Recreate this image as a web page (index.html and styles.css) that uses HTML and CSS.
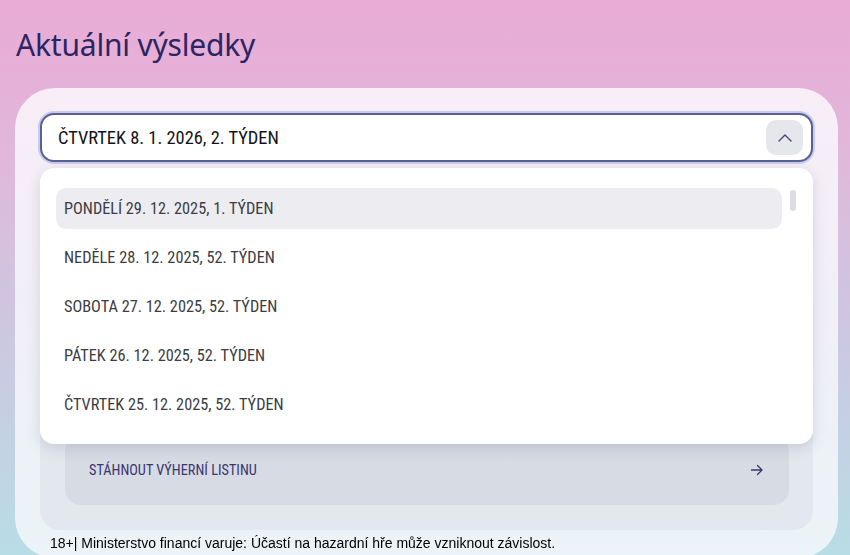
FILE: index.html
```html
<!DOCTYPE html>
<html lang="cs">
<head>
<meta charset="utf-8">
<title>Aktuální výsledky</title>
<link rel="stylesheet" href="styles.css">
</head>
<body>
<main class="page">
  <h1 class="title">Aktuální výsledky</h1>
  <section class="card">
    <div class="select-wrap">
      <div class="select">
        <span class="select-value">ČTVRTEK 8. 1. 2026, 2. TÝDEN</span>
        <span class="select-btn">
          <svg width="18" height="18" viewBox="0 0 18 18" fill="none" stroke="#4a4872" stroke-width="1.4" stroke-linecap="round" stroke-linejoin="round"><path d="M3 12 L9 6 L15 12"/></svg>
        </span>
      </div>
      <ul class="menu">
        <li class="opt opt-active">PONDĚLÍ 29. 12. 2025, 1. TÝDEN</li>
        <li class="opt">NEDĚLE 28. 12. 2025, 52. TÝDEN</li>
        <li class="opt">SOBOTA 27. 12. 2025, 52. TÝDEN</li>
        <li class="opt">PÁTEK 26. 12. 2025, 52. TÝDEN</li>
        <li class="opt">ČTVRTEK 25. 12. 2025, 52. TÝDEN</li>
        <li class="scrollbar"></li>
      </ul>
    </div>
    <div class="panel">
      <a class="download" href="#">
        <span>STÁHNOUT VÝHERNÍ LISTINU</span>
        <svg width="16" height="16" viewBox="0 0 16 16" fill="none" stroke="#3a3670" stroke-width="1.3" stroke-linecap="round" stroke-linejoin="round"><path d="M2.5 8 H13 M8.5 3.5 L13 8 L8.5 12.5"/></svg>
      </a>
    </div>
  </section>
</main>
<footer class="warning">18+| Ministerstvo financí varuje: Účastí na hazardní hře může vzniknout závislost.</footer>
</body>
</html>
```
FILE: styles.css
```css
html, body {
  margin: 0;
  padding: 0;
  height: 100%;
}
body {
  background: linear-gradient(180deg, #e9abd5 0%, #e2b6da 25%, #d2c3e0 50%, #c5cfe3 75%, #b8dde6 100%);
  font-family: "Roboto Condensed", "Liberation Sans Narrow", "DejaVu Sans Condensed", sans-serif;
  overflow: hidden;
}
.page {
  padding: 0 12px 0 15px;
}
.title {
  margin: 0;
  padding: 30px 0 0 1px;
  height: 58px;
  box-sizing: border-box;
  font-family: "Noto Sans", sans-serif;
  font-weight: 400;
  font-size: 30px;
  letter-spacing: -0.2px;
  color: #2b2563;
  line-height: 30px;
}
.card {
  margin-top: 30px;
  height: 470px;
  box-sizing: border-box;
  border-radius: 40px;
  background: linear-gradient(180deg, rgba(250,244,250,0.9) 0%, rgba(244,244,248,0.9) 50%, rgba(240,246,249,0.9) 100%);
  padding: 25px 25px 0 25px;
}
.select-wrap {
  position: relative;
}
.select {
  height: 49px;
  box-sizing: border-box;
  border: 2px solid #5f5e92;
  border-radius: 14px;
  background: #fff;
  box-shadow: 0 0 0 2px #c5cdef;
  display: flex;
  align-items: center;
  justify-content: space-between;
  padding: 0 8px 0 16px;
}
.select-value {
  font-size: 18.4px;
  color: #141418;
}
.select-btn {
  width: 37px;
  height: 35px;
  border-radius: 10px;
  background: #e6e6ed;
  display: flex;
  align-items: center;
  justify-content: center;
}
.menu {
  position: absolute;
  top: 55px;
  left: 0;
  right: 0;
  height: 276px;
  box-sizing: border-box;
  margin: 0;
  list-style: none;
  background: #fff;
  border-radius: 14px;
  box-shadow: 0 4px 14px rgba(80, 80, 110, 0.18);
  padding: 20px 31px 0 16px;
  z-index: 2;
}
.opt {
  height: 41px;
  margin-bottom: 8px;
  border-radius: 10px;
  padding-left: 8px;
  display: flex;
  align-items: center;
  font-size: 16.3px;
  color: #3c3c42;
}
.opt-active {
  background: #ececf1;
}
.scrollbar {
  position: absolute;
  top: 22px;
  right: 17px;
  width: 6px;
  height: 21px;
  border-radius: 3px;
  background: #dcdce3;
}
.panel {
  margin-top: 48px;
  height: 320px;
  box-sizing: border-box;
  border-radius: 20px;
  background: rgba(214, 219, 228, 0.45);
  padding: 225px 24px 0 25px;
}
.download {
  height: 70px;
  box-sizing: border-box;
  border-radius: 16px;
  background: rgba(205, 207, 218, 0.55);
  display: flex;
  align-items: center;
  justify-content: space-between;
  padding: 0 24px 0 24px;
  text-decoration: none;
  color: #3a3670;
  font-size: 14.3px;
  font-weight: 400;
}
.warning {
  position: fixed;
  left: 50px;
  bottom: 4px;
  font-family: "Liberation Sans", Arial, sans-serif;
  font-size: 14px;
  color: #000;
}
```
